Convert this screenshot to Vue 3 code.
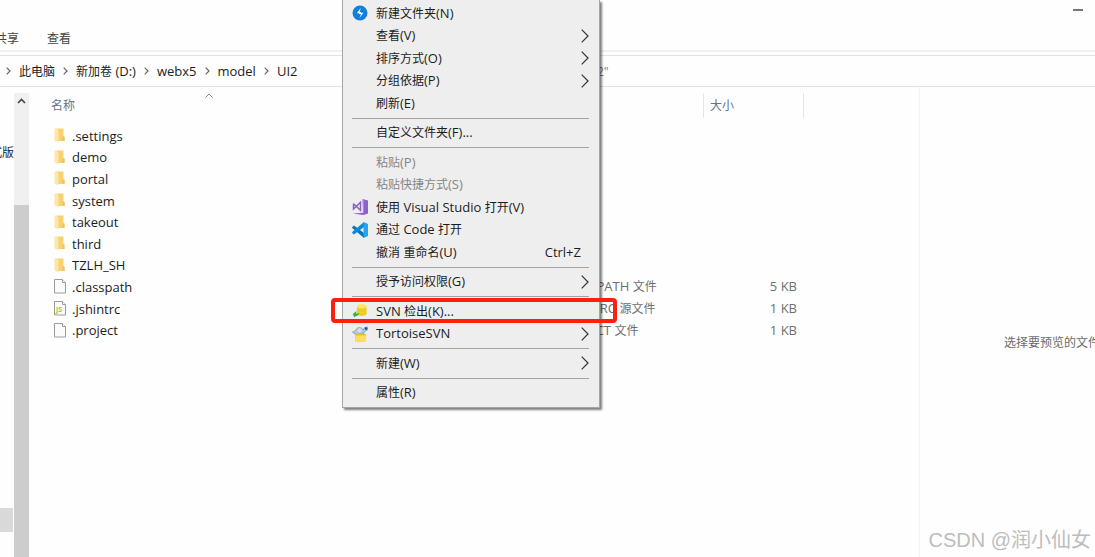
<script setup>
import { h } from 'vue'

// Latin runs are set one step larger than the Chinese text around them.
const Mixed = (props) =>
  h(
    'span',
    { class: 'mixed' },
    props.text
      .split(/([\x20-\x7e]+)/)
      .filter(Boolean)
      .map((run) => h('span', { class: /^[\x20-\x7e]/.test(run) ? 'latin' : 'han' }, run))
  )
Mixed.props = ['text']

const crumbs = ['此电脑', '新加卷 (D:)', 'webx5', 'model', 'UI2']

const files = [
  { name: '.settings', icon: 'folder' },
  { name: 'demo', icon: 'folder' },
  { name: 'portal', icon: 'folder' },
  { name: 'system', icon: 'folder' },
  { name: 'takeout', icon: 'folder' },
  { name: 'third', icon: 'folder' },
  { name: 'TZLH_SH', icon: 'folder' },
  { name: '.classpath', icon: 'file', type: 'CLASSPATH 文件', size: '5 KB' },
  { name: '.jshintrc', icon: 'js', type: 'JSHINTRC 源文件', size: '1 KB' },
  { name: '.project', icon: 'file', type: 'PROJECT 文件', size: '1 KB' }
]

const menu = [
  { label: '新建文件夹(N)', icon: 'bolt' },
  { label: '查看(V)', sub: true },
  { label: '排序方式(O)', sub: true },
  { label: '分组依据(P)', sub: true },
  { label: '刷新(E)' },
  { sep: true },
  { label: '自定义文件夹(F)...' },
  { sep: true },
  { label: '粘贴(P)', disabled: true },
  { label: '粘贴快捷方式(S)', disabled: true },
  { label: '使用 Visual Studio 打开(V)', icon: 'vs' },
  { label: '通过 Code 打开', icon: 'code' },
  { label: '撤消 重命名(U)', key: 'Ctrl+Z' },
  { sep: true },
  { label: '授予访问权限(G)', sub: true },
  { sep: true },
  { label: 'SVN 检出(K)...', icon: 'checkout', marked: true },
  { label: 'TortoiseSVN', icon: 'tortoise', sub: true },
  { sep: true },
  { label: '新建(W)', sub: true },
  { sep: true },
  { label: '属性(R)' }
]
</script>

<template>
  <div class="window">
    <header class="titlebar">
      <button class="minimize" aria-label="最小化"></button>
    </header>
    <nav class="ribbon">
      <button>共享</button>
      <button>查看</button>
    </nav>

    <div class="address">
      <div class="crumbs">
        <template v-for="c in crumbs" :key="c">
          <svg class="crumb-arrow" viewBox="0 0 5 8"><path d="M.7.7 4 4 .7 7.3" /></svg>
          <a href="#"><Mixed :text="c" /></a>
        </template>
      </div>
      <input class="search" type="text" aria-label="搜索" placeholder="搜索&quot;UI2&quot;" />
    </div>

    <main class="body">
      <aside class="tree">
        <span class="tree-label">式版</span>
        <span class="tree-current"></span>
      </aside>
      <div class="scrollbar">
        <svg viewBox="0 0 9 6"><path d="M1 5 4.500 1.500 8 5" /></svg>
        <div class="thumb"></div>
      </div>

      <section class="list">
        <table>
          <colgroup>
            <col class="c-name" /><col class="c-date" /><col class="c-type" /><col class="c-size" />
          </colgroup>
          <thead>
            <tr>
              <th class="sorted">
                名称
                <svg class="sort" viewBox="0 0 8 5"><path d="M.5 4.500 4 1l3.500 3.500" /></svg>
              </th>
              <th></th>
              <th class="lined"></th>
              <th class="lined">大小</th>
            </tr>
          </thead>
          <tbody>
            <tr v-for="f in files" :key="f.name">
              <td>
                <span class="name">
                  <svg v-if="f.icon === 'folder'" class="ficon" viewBox="0 0 13 15">
                    <path d="M2.500.5H9.500v7.500l1 1v4H2.500z" fill="#f6d272" />
                    <path d="M.5.5h2l2 1.500V14.500L.5 12.500z" fill="#fce7a8" />
                    <path d="M8.500 8.500h2V13h-2z" fill="#efc55e" />
                  </svg>
                  <svg v-else class="ficon" viewBox="0 0 13 15">
                    <path d="M.5.5H8.500l3 3v10.500H.5z" fill="#fbfbfb" stroke="#9c9c9c" />
                    <path d="M8.500.5v3h3" fill="#fff" stroke="#9c9c9c" />
                    <text v-if="f.icon === 'js'" x="2" y="11" class="js">JS</text>
                  </svg>
                  <span>{{ f.name }}</span>
                </span>
              </td>
              <td></td>
              <td class="meta"><Mixed v-if="f.type" :text="f.type" /></td>
              <td class="meta size"><Mixed v-if="f.size" :text="f.size" /></td>
            </tr>
          </tbody>
        </table>
      </section>

      <aside class="preview">选择要预览的文件。</aside>
    </main>

    <div class="menu" role="menu">
      <template v-for="(m, i) in menu" :key="i">
        <div v-if="m.sep" class="sep"></div>
        <button v-else role="menuitem" class="item" :class="{ marked: m.marked }" :disabled="m.disabled">
          <span class="micon">
            <svg v-if="m.icon === 'bolt'" viewBox="0 0 16 16">
              <circle cx="8" cy="8" r="7.500" fill="#0f80dc" />
              <path d="M8.800 3 4.800 8.200h2.400v.8H9l-1.600 4 4-5.200H9V7H7.600z" fill="#fff" />
            </svg>
            <svg v-else-if="m.icon === 'vs'" viewBox="0 0 16 16">
              <path d="M10.500 0 16 1.500v13L11.500 16 .5 14.500l10.500-.8z" fill="#8b62cc" />
              <path d="M11.500 1v13" stroke="#a983e0" />
              <path d="M1.500 4.500v5.500L8.500 3.300v7.900L1.500 4.700" fill="none" stroke="#8b62cc" stroke-width="1.500" />
            </svg>
            <svg v-else-if="m.icon === 'code'" viewBox="0 0 16 16">
              <path d="M.2 5 2 3.500 12 11v5L.2 6z" fill="#0878be" />
              <path d="M.2 11 2 12.500 12 5V0L.2 10z" fill="#0c8bd5" />
              <path d="M11.500 0 16 2v12l-4.500 2z" fill="#25a4ee" />
            </svg>
            <svg v-else-if="m.icon === 'checkout'" viewBox="0 0 16 16">
              <path d="M5 3v8c0 2.600 9.500 2.600 9.500 0V3z" fill="#f7cf2b" />
              <ellipse cx="9.700" cy="3" rx="4.700" ry="2" fill="#ffe768" />
              <path d="M5 6.500c1 2 8.500 2 9.500 0M5 9.500c1 2 8.500 2 9.500 0" fill="none" stroke="#e5b51c" stroke-width=".7" />
              <path d="M4.500 8 .8 11l1.500 3.500 1.200-1.200c2-.3 3.300-1.500 3.700-3.300-1 .6-2 .9-3 .7z" fill="#38b43c" />
            </svg>
            <svg v-else-if="m.icon === 'tortoise'" viewBox="0 0 16 16">
              <path d="M.5 6C2 5.500 3 5 4 3.500 6 .5 9.500.8 11 4l1.500-2.500 2.800-.5.200 3-3 1.500-1 2.500H3z" fill="#a9c9e8" stroke="#6e94b8" stroke-width=".7" />
              <circle cx="14" cy="2.500" r="1.300" fill="#274c70" />
              <circle cx="7.500" cy="4.500" r="2" fill="#d1e4f7" />
              <path d="M3 7h4l1.200 1H14v7.500H3z" fill="#edbd2b" />
              <path d="M3.500 9.500h11l-.8 6H3z" fill="#ffdf59" />
            </svg>
          </span>
          <Mixed :text="m.label" />
          <span v-if="m.key" class="key">{{ m.key }}</span>
          <svg v-if="m.sub" class="chev" viewBox="0 0 8 14"><path d="m.7.7 6.300 6.300-6.300 6.300" /></svg>
        </button>
      </template>
    </div>

    <div class="watermark">CSDN @润小仙女</div>
  </div>
</template>

<style>
body {
  margin: 0;
  background: #fff;
}
</style>

<style scoped>
.window {
  position: relative;
  display: flex;
  flex-direction: column;
  min-height: 100vh;
  overflow: hidden;
  background: #fefefe;
  color: #1c1c1c;
  font-family: "Open Sans", "Noto Sans CJK SC", sans-serif;
  font-size: 12px;
}
button {
  padding: 0;
  border: 0;
  background: none;
  font: inherit;
  color: inherit;
}
a {
  color: inherit;
  text-decoration: none;
}
:deep(.mixed) {
  white-space: pre;
}
:deep(.latin) {
  font-size: 13px;
}
.titlebar {
  display: flex;
  justify-content: flex-end;
  height: 26px;
}
.minimize {
  width: 10px;
  height: 2px;
  margin: 9px 12px 0 0;
  background: #777;
}
.ribbon {
  display: flex;
  gap: 28px;
  height: 24px;
  margin-left: -5px;
  border-bottom: 2px solid #f0f0f0;
  color: #444;
}
.address {
  display: flex;
  align-items: center;
  height: 30px;
  margin-top: 3px;
  border-top: 1px solid #e2e2e2;
  border-bottom: 1px solid #e2e2e2;
}
.crumbs {
  display: flex;
  align-items: center;
  gap: 8px;
  width: 550px;
  padding-left: 6px;
}
.crumb-arrow {
  width: 5px;
  height: 8px;
}
.crumb-arrow path {
  fill: none;
  stroke: #666;
  stroke-width: 1.200;
}
.search {
  flex: 1;
  min-width: 0;
  padding: 0;
  border: 0;
  outline: 0;
  background: none;
  font: inherit;
}
.search::placeholder {
  color: #757c88;
  opacity: 1;
}
.body {
  display: flex;
  flex: 1;
}
.tree {
  display: flex;
  flex-direction: column;
  align-items: flex-end;
  justify-content: space-between;
  width: 14px;
  padding: 57px 0 25px;
  overflow: hidden;
  box-sizing: border-box;
  color: #1c2440;
}
.tree-label {
  line-height: 18px;
  white-space: nowrap;
}
.tree-current {
  align-self: flex-start;
  width: 13px;
  height: 24px;
  background: #d9d9d9;
}
.scrollbar {
  display: flex;
  flex-direction: column;
  align-items: center;
  width: 15px;
  margin-top: 6px;
  background: #f0f0f0;
}
.scrollbar svg {
  width: 9px;
  height: 6px;
  margin: 5px 0 101px;
}
.scrollbar path {
  fill: none;
  stroke: #444;
  stroke-width: 1.600;
}
.thumb {
  flex: 1;
  width: 100%;
  background: #cdcdcd;
}
.list {
  flex: 1;
  min-width: 0;
  padding-left: 16px;
}
table {
  table-layout: fixed;
  width: 759px;
  height: 254px;
  border-collapse: separate;
  border-spacing: 0;
}
.c-name { width: 320px; }
.c-date { width: 188px; }
.c-type { width: 151px; }
.c-size { width: 100px; }
th,
td {
  padding: 0;
  text-align: left;
  white-space: nowrap;
}
thead tr {
  height: 38px;
}
th {
  position: relative;
  padding: 0 0 2px 6px;
  color: #63748c;
  font-weight: 400;
}
.lined::after {
  content: "";
  position: absolute;
  top: 6px;
  right: 0;
  bottom: 7px;
  width: 1px;
  background: #e5e5e5;
}
.sort {
  position: absolute;
  top: 6px;
  left: 50%;
  width: 8px;
  height: 5px;
}
.sort path {
  fill: none;
  stroke: #888;
}
.name {
  display: flex;
  align-items: center;
  gap: 5px;
  padding-left: 9px;
  font-size: 13px;
  line-height: 18px;
}
.ficon {
  width: 13px;
  height: 15px;
}
.js {
  fill: #b9bd27;
  font: bold 7px "Noto Sans", sans-serif;
}
.meta {
  padding-left: 6px;
  color: #6f6f6f;
  line-height: 16px;
}
.size {
  padding-right: 7px;
  text-align: right;
}
.preview {
  display: flex;
  align-items: center;
  width: 176px;
  padding: 40px 0 0 84px;
  border-left: 1px solid #f3f3f3;
  box-sizing: border-box;
  overflow: hidden;
  white-space: nowrap;
  color: #6b6b6b;
}
.menu {
  position: absolute;
  top: 0;
  left: 342px;
  display: flex;
  flex-direction: column;
  width: 258px;
  min-height: 408px;
  padding: 2px 10px 3px 9px;
  box-sizing: border-box;
  border: 1px solid #a5a5a5;
  border-top: 0;
  background: #eee;
  box-shadow: 2px 2px 2px rgba(0, 0, 0, 0.5);
}
.item {
  position: relative;
  display: flex;
  flex: 1 0 22px;
  align-items: center;
  line-height: 20px;
  text-align: left;
}
.item:disabled {
  color: #858585;
}
.micon {
  display: flex;
  width: 24px;
}
.micon svg {
  width: 16px;
  height: 16px;
}
.key {
  margin: 0 8px 0 auto;
  font-size: 13px;
}
.chev {
  width: 8px;
  height: 14px;
  margin-left: auto;
}
.chev path {
  fill: none;
  stroke: #333;
  stroke-width: 1.200;
}
.sep {
  height: 1px;
  margin: 3px 0;
  background: #a3a3a3;
}
.marked::after {
  content: "";
  position: absolute;
  z-index: 1;
  inset: -2px -28px 0 -21px;
  border: 4px solid #ff1f10;
  border-radius: 4px;
}
.watermark {
  position: absolute;
  right: 4px;
  bottom: 2px;
  color: #bdbdbd;
  font: 20px/30px "Liberation Sans", "Noto Sans CJK SC", sans-serif;
}
</style>
